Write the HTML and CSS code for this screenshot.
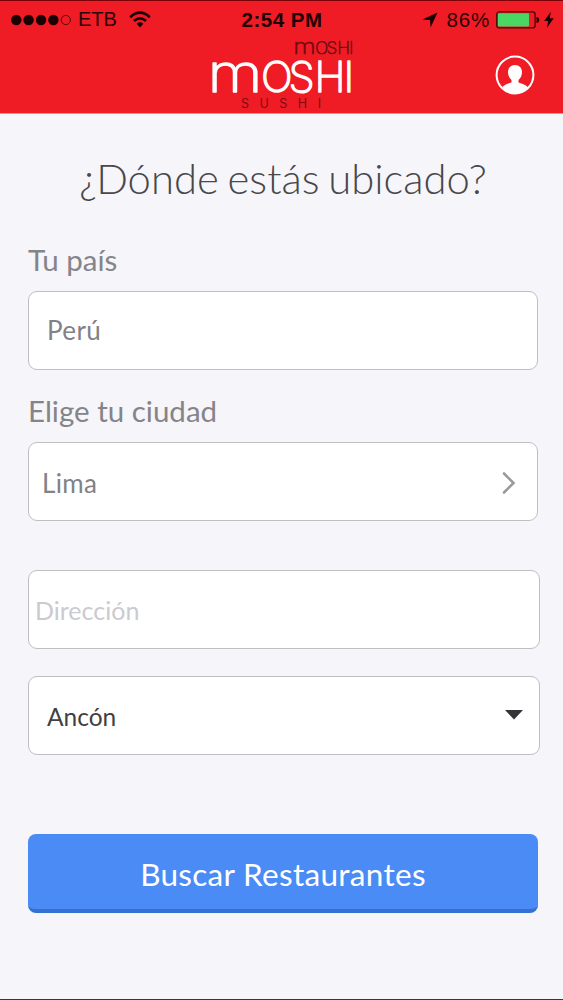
FILE: index.html
```html
<!DOCTYPE html>
<html lang="es">
<head>
    <meta charset="UTF-8">
    <meta name="viewport" content="width=device-width, initial-scale=1.0">
    <title>Moshi Moshi Sushi</title>
    <link rel="stylesheet" href="styles.css">
</head>
<body>

<header class="header">
    <!-- Barra de estado -->
    <div class="status">
        <div class="status-left">
            <svg class="signal" width="60" height="12" viewBox="0 0 60 12">
                <circle cx="5.3" cy="6" r="5.2"/>
                <circle cx="17.6" cy="6" r="5.2"/>
                <circle cx="30" cy="6" r="5.2"/>
                <circle cx="42.4" cy="6" r="5.2"/>
                <circle class="empty" cx="54.8" cy="6" r="4.6"/>
            </svg>
            <span class="carrier">ETB</span>
            <svg class="wifi" width="22" height="18" viewBox="0 0 22 18">
                <path class="arc" d="M1.2 6.2Q11 -3 20.8 6.2"/>
                <path class="arc" d="M5 10Q11 4.6 17 10"/>
                <path d="M7.6 12.7Q11 9.8 14.4 12.7L11 16.4Z"/>
            </svg>
        </div>
        <div class="time">2:54 PM</div>
        <div class="status-right">
            <svg width="16" height="16" viewBox="0 0 16 16"><path d="M15.5 .5L8.6 15.5L8 8L.5 7.5Z"/></svg>
            <span class="percent">86%</span>
            <svg class="battery" width="44" height="18" viewBox="0 0 44 18">
                <rect class="case" x=".7" y=".9" width="38.4" height="16" rx="2.5"/>
                <rect class="charge" x="2" y="2.3" width="31" height="13.2" rx="1"/>
                <path d="M40.5 6Q43.2 6.4 43.2 9T40.5 12Z"/>
            </svg>
            <svg class="bolt" width="10" height="18" viewBox="0 0 10 18"><path d="M6.8 .8L.2 10H4.2L2.8 17L9.8 7.2H5.8Z"/></svg>
        </div>
    </div>

    <div class="nav">
        <svg class="logo" width="144" height="72" viewBox="0 0 144 72">
            <g class="logo-word small" transform="translate(84.3 16) scale(0.41)">
                <text class="m" x="-2.500" textLength="55" lengthAdjust="spacingAndGlyphs">m</text>
                <text x="51 78.500 104.500 133.500">OSHI</text>
            </g>
            <g class="logo-word" transform="translate(0 53.500)">
                <text class="m" x="-2.500" textLength="55" lengthAdjust="spacingAndGlyphs">m</text>
                <text x="51 78.500 104.500 133.500">OSHI</text>
            </g>
            <text class="logo-sub" x="31" y="70" textLength="80">SUSHI</text>
        </svg>
        <svg class="user" width="40" height="40" viewBox="0 0 40 40">
            <circle class="ring" cx="20" cy="20" r="18.4"/>
            <path d="M20 10C24.3 10 27 13 27 17C27 20.5 25.5 23.5 23.5 25V27.5C27.5 28.7 31 29.7 33 32.5C26 40.5 14 40.5 7 32.5C9 29.7 12.5 28.7 16.5 27.5V25C14.500 23.5 13 20.5 13 17C13 13 15.700 10 20 10Z"/>
        </svg>
    </div>
</header>

<main class="content">
    <h1>¿Dónde estás ubicado?</h1>

    <div class="label">Tu país</div>
    <div class="field country">Perú</div>

    <div class="label">Elige tu ciudad</div>
    <div class="field city">
        <span>Lima</span>
        <svg width="14" height="24" viewBox="0 0 14 24"><path d="M2 2.500L11.500 12L2 21.500"/></svg>
    </div>

    <div class="field wide address">Dirección</div>
    <div class="field wide district">
        <span>Ancón</span>
        <svg width="18" height="10" viewBox="0 0 18 10"><path d="M0 0H18L9 9.500Z"/></svg>
    </div>

    <button class="search">Buscar Restaurantes</button>
</main>

</body>
</html>
```
FILE: styles.css
```css
* {
    box-sizing: border-box;
}
body {
    margin: 0;
    height: 1000px;
    overflow: hidden;
    font-family: Lato, sans-serif;
    background-color: #f6f5f9;
    border-bottom: 1px solid #38373b;
}
svg {
    display: block;
    flex-shrink: 0;
}
.header {
    height: 114px;
    background-color: #f01c25;
    border-top: 1px solid #7a0008;
    border-bottom: 1px solid #d69ca0;
}
.status {
    display: grid;
    grid-template-columns: 1fr auto 1fr;
    align-items: center;
    height: 37px;
    padding: 0 9px 0 11px;
    font-family: "Liberation Sans", Arial, sans-serif;
    font-size: 20px;
    color: #2a0204;
}
.status svg {
    fill: #1c0103;
}
.status-left, .status-right {
    display: flex;
    align-items: center;
}
.status-right {
    justify-content: flex-end;
}
.signal .empty {
    fill: none;
    stroke: #5a060b;
    stroke-width: 1;
}
.carrier {
    margin: 0 12px 0 7px;
}
.wifi .arc {
    fill: none;
    stroke: #1c0103;
    stroke-width: 2.6;
}
.time {
    font-size: 20.500px;
    font-weight: bold;
    letter-spacing: 0.5px;
    margin-right: 1px;
    color: #1c0103;
}
.percent {
    font-size: 20.500px;
    letter-spacing: 0.8px;
    margin: 0 6px 0 9px;
}
.battery .case {
    fill: none;
    stroke: #4a0508;
    stroke-width: 1.3;
}
.battery .charge {
    fill: #4bd763;
}
.bolt {
    margin-left: 4px;
}
.nav {
    display: grid;
    grid-template-columns: 1fr 144px 1fr;
    align-items: start;
}
.logo {
    grid-column: 2;
    overflow: visible;
    font-family: Inter, sans-serif;
}
.logo-word {
    font-size: 42px;
    font-weight: 200;
    fill: #fff;
    stroke: #fff;
    stroke-width: 1.3;
    stroke-linejoin: round;
}
.logo-word .m {
    font-size: 53px;
}
.logo-word.small {
    fill: #6d0b11;
    stroke: #6d0b11;
}
.logo-sub {
    font-size: 12.500px;
    fill: #7d0d13;
}
.user {
    justify-self: end;
    margin: 17px 28px 0 0;
    fill: #fff;
}
.user .ring {
    fill: none;
    stroke: #fff;
    stroke-width: 2;
}
.content {
    padding: 0 25px 0 28px;
}
h1 {
    margin: 39px 0 0;
    font-size: 41.800px;
    font-weight: 300;
    line-height: 50px;
    text-align: center;
    word-spacing: -2.500px;
    color: #48474b;
}
.label {
    display: flex;
    align-items: center;
    height: 36px;
    margin-top: 38px;
    margin-bottom: 14px;
    font-size: 29.500px;
    color: #858489;
}
.field {
    display: flex;
    align-items: center;
    justify-content: space-between;
    height: 79px;
    background-color: #fff;
    border: 1.500px solid #bfbec3;
    border-radius: 9px;
    font-size: 26px;
    color: #828186;
}
.country {
    padding-left: 18px;
    padding-bottom: 2px;
    letter-spacing: 0.4px;
}
.country + .label {
    margin-top: 22px;
}
.city {
    padding: 2px 21px 0 13px;
    letter-spacing: 0.3px;
}
.city svg {
    fill: none;
    stroke: #9a999e;
    stroke-width: 2.6;
    stroke-linecap: round;
}
.wide {
    margin-right: -2px;
}
.address {
    margin-top: 49px;
    padding: 0 0 0 6px;
    font-size: 25px;
    color: #cbcad0;
}
.district {
    margin-top: 27px;
    padding: 1px 16px 0 18px;
    font-size: 24.500px;
    color: #403f43;
}
.district svg {
    fill: #353438;
    margin-bottom: 2px;
}
.search {
    display: block;
    width: 100%;
    height: 79px;
    margin-top: 79px;
    padding: 4px 0 0;
    border: none;
    border-bottom: 4px solid #3571d3;
    border-radius: 8px;
    background-color: #4b8bf5;
    font-family: inherit;
    font-size: 31.500px;
    letter-spacing: 0.3px;
    color: #fff;
}
```
